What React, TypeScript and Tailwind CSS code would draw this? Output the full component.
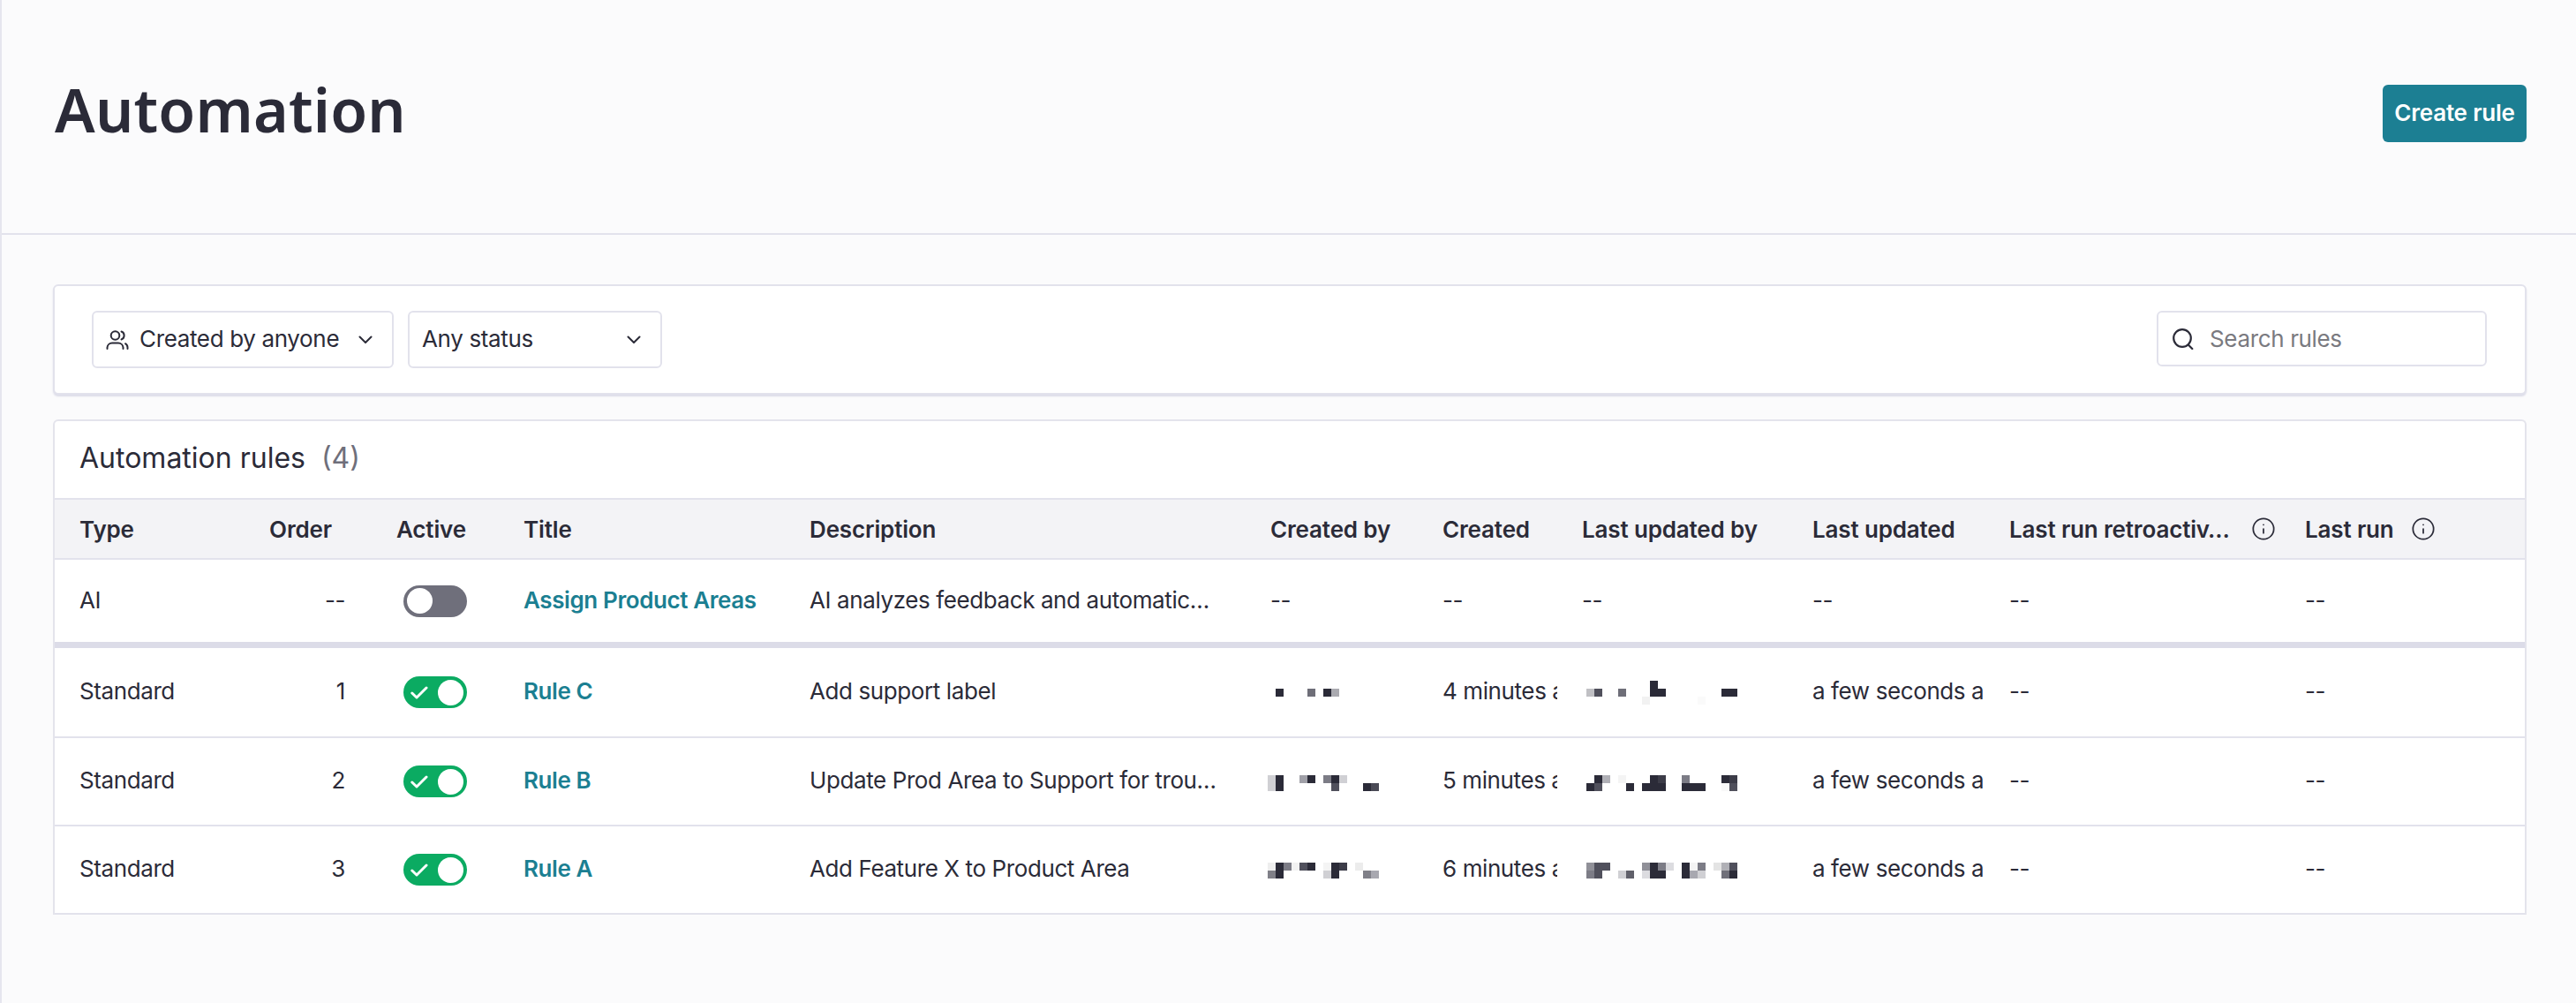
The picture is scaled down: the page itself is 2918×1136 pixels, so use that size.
import { Info } from 'lucide-react';

const D = '#2b2b38';
const ROW = 'grid grid-cols-[228px_145px_144px_324px_522px_195px_158px_261px_223px_335px_1fr] items-center';

type Cell = [number, number, string];

// pixelated names, one 9px block per cell
function Mosaic({ cells, rows, cols }: { cells: Cell[]; rows: number; cols: number }) {
  return (
    <svg width={cols * 9} height={rows * 9} viewBox={`0 0 ${cols * 9} ${rows * 9}`} shapeRendering="crispEdges">
      {cells.map(([c, r, fill], i) => (
        <rect key={i} x={c * 9} y={r * 9} width={9} height={9} fill={fill} />
      ))}
    </svg>
  );
}

const createdByC: Cell[] = [[1, 0, D], [5, 0, '#6e6e78'], [7, 0, D], [8, 0, '#aaaab0']];
const createdByB: Cell[] = [
  [0, 0, '#d0d0d4'], [1, 0, D], [4, 0, '#a0a0a8'], [5, 0, D], [7, 0, '#7c7c86'], [8, 0, D], [9, 0, '#d0d0d4'],
  [0, 1, '#d0d0d4'], [1, 1, D], [8, 1, '#50505c'], [12, 1, D], [13, 1, '#4a4a56'],
];
const createdByA: Cell[] = [
  [0, 0, '#eeeeee'], [1, 0, D], [2, 0, '#7c7c86'], [3, 0, '#f2f2f2'], [4, 0, '#50505c'], [5, 0, D], [7, 0, '#f4f4f4'], [8, 0, D], [9, 0, '#3c3c48'], [11, 0, '#ececec'],
  [0, 1, '#808088'], [1, 1, D], [7, 1, '#d0d0d4'], [8, 1, D], [12, 1, '#808088'], [13, 1, '#a8a8b0'],
];
const updatedByC: Cell[] = [
  [8, 0, D],
  [0, 1, '#c0c0c4'], [1, 1, '#50505c'], [4, 1, '#6e6e78'], [8, 1, D], [9, 1, D], [17, 1, D], [18, 1, D],
  [7, 2, '#f2f2f2'], [14, 2, '#fafafa'],
];
const updatedByB: Cell[] = [
  [1, 0, D], [2, 0, '#b0b0b6'], [4, 0, '#f4f4f4'], [8, 0, D], [9, 0, '#3c3c48'], [12, 0, '#7c7c86'], [17, 0, D], [18, 0, '#3c3c48'],
  [0, 1, D], [1, 1, '#50505c'], [5, 1, D], [7, 1, D], [8, 1, D], [9, 1, D], [12, 1, D], [13, 1, D], [14, 1, D], [17, 1, '#f8f8f8'], [18, 1, '#50505c'],
];
const updatedByA: Cell[] = [
  [0, 0, '#909098'], [1, 0, '#50505c'], [2, 0, '#50505c'], [7, 0, '#909098'], [8, 0, D], [9, 0, '#7c7c86'], [10, 0, '#dcdce0'], [12, 0, D], [13, 0, '#f4f4f4'], [14, 0, '#7c7c86'], [16, 0, '#e4e4e4'], [17, 0, '#b0b0b6'], [18, 0, '#50505c'],
  [0, 1, '#7c7c86'], [1, 1, '#50505c'], [4, 1, '#d0d0d4'], [5, 1, '#60606a'], [7, 1, '#dcdce0'], [8, 1, D], [9, 1, D], [12, 1, D], [13, 1, '#a8a8b0'], [14, 1, '#d0d0d4'], [17, 1, '#70707a'], [18, 1, D],
];

function Chevron() {
  return (
    <svg width="16" height="9" viewBox="0 0 16 9" fill="none" stroke={D} strokeWidth="2" strokeLinecap="round" strokeLinejoin="round">
      <path d="M1.5 1.5 8 8l6.500-6.500" />
    </svg>
  );
}

function UsersIcon() {
  return (
    <svg width="26" height="22" viewBox="0 0 26 22" fill="none" stroke={D} strokeWidth="2" strokeLinecap="round">
      <circle cx="10.500" cy="6" r="4.800" />
      <path d="M1.500 21v-1.500a5.500 5.500 0 0 1 5.500-5h7a5.500 5.500 0 0 1 5.500 5V21" />
      <path d="M17.500 1.500a4.800 4.800 0 0 1 0 9" />
      <path d="M24.500 21v-1.500a5 5 0 0 0-2.500-4.300" />
    </svg>
  );
}

function SearchIcon() {
  return (
    <svg width="24" height="24" viewBox="0 0 24 24" fill="none" stroke={D} strokeWidth="2.200" strokeLinecap="round">
      <circle cx="11" cy="11" r="9.800" />
      <path d="m17.800 18.500 4.500 4.500" />
    </svg>
  );
}

function Toggle({ on }: { on: boolean }) {
  if (!on) {
    return (
      <div className="ml-[22px] flex h-[36px] w-[72px] items-center rounded-full bg-[#6f6f7b] pl-[4px]">
        <div className="h-[29px] w-[29px] rounded-full bg-white" />
      </div>
    );
  }
  return (
    <div className="ml-[22px] flex h-[36px] w-[72px] items-center justify-between rounded-full bg-[#0bab62] pl-[8px] pr-[4px]">
      <svg width="20" height="15" viewBox="0 0 20 15" fill="none" stroke="white" strokeWidth="3" strokeLinecap="round" strokeLinejoin="round">
        <path d="M1.800 8 7 13 18 2" />
      </svg>
      <div className="h-[29px] w-[29px] rounded-full bg-white" />
    </div>
  );
}

function Filter({ width, children }: { width: string; children: React.ReactNode }) {
  return (
    <button className={`flex h-[65px] items-center justify-between rounded-[6px] border-2 border-[#e2e2ec] bg-white pl-[14px] pr-[22px] ${width}`}>
      {children}
    </button>
  );
}

function HeadCell({ label, info, className = '' }: { label: string; info?: boolean; className?: string }) {
  return (
    <div className={`flex items-center whitespace-nowrap pl-[14px] text-[26px] font-semibold tracking-[-0.15px] ${className}`}>
      <span>{label}</span>
      {info && <Info size={28} strokeWidth={1.5} className="ml-auto shrink-0" />}
    </div>
  );
}

function Cell({ children, className = '' }: { children: React.ReactNode; className?: string }) {
  return <div className={`overflow-hidden whitespace-nowrap pb-[3px] pl-[14px] ${className}`}>{children}</div>;
}

const rules = [
  { order: '1', name: 'Rule C', desc: 'Add support label', by: createdByC, byRows: 1, created: '4 minutes ago', upBy: updatedByC, upRows: 3, h: 'h-[102px]', nudge: '' },
  { order: '2', name: 'Rule B', desc: 'Update Prod Area to Support for trou…', by: createdByB, byRows: 2, created: '5 minutes ago', upBy: updatedByB, upRows: 2, h: 'h-[100px]', nudge: 'mt-[4px]' },
  { order: '3', name: 'Rule A', desc: 'Add Feature X to Product Area', by: createdByA, byRows: 2, created: '6 minutes ago', upBy: updatedByA, upRows: 2, h: 'h-[100px]', nudge: 'mt-[2px]' },
];

export default function App() {
  return (
    <div
      className="min-h-[1136px] border-l-2 border-[#e6e6ee] bg-[#fbfbfc] text-[#2b2b38]"
      style={{ fontFamily: 'Inter, "Liberation Sans", sans-serif' }}
    >
      <header className="flex h-[266px] items-start justify-between border-b-2 border-[#e2e2ec] pl-[60px] pr-[56px] pt-[96px]">
        <h1 className="text-[68px] font-semibold leading-[56px] tracking-[0.2px]" style={{ fontFamily: '"Noto Sans", sans-serif' }}>Automation</h1>
        <button className="h-[65px] w-[163px] rounded-[6px] bg-[#1c7f93] pb-[2px] text-[26px] font-semibold tracking-[-0.2px] text-white">Create rule</button>
      </header>

      <main className="pl-[58px] pr-[56px] pt-[56px]">
        <section className="flex h-[125px] items-center justify-between rounded-[6px] border-2 border-[#e2e2ec] bg-white pl-[42px] pr-[43px] shadow-[0_2px_2px_#dcdce8]">
          <div className="flex gap-[16px] text-[26px] tracking-[-0.35px]">
            <Filter width="w-[342px]">
              <span className="flex items-center gap-[12px]">
                <UsersIcon />
                <span className="pb-[2px]">Created by anyone</span>
              </span>
              <Chevron />
            </Filter>
            <Filter width="w-[288px]">
              <span className="pb-[2px]">Any status</span>
              <Chevron />
            </Filter>
          </div>
          <div className="mb-[2px] flex h-[63px] w-[374px] items-center gap-[18px] rounded-[6px] border-2 border-[#e2e2ec] bg-white pl-[16px]">
            <SearchIcon />
            <input placeholder="Search rules" className="w-[300px] bg-transparent text-[26px] tracking-[-0.35px] outline-none placeholder:text-[#7a7a80]" />
          </div>
        </section>

        <section className="mt-[28px] rounded-t-[6px] border-x-2 border-t-2 border-[#e4e4ec] bg-white text-[26px] tracking-[-0.4px]">
          <div className="flex h-[87px] items-center pb-[3px] pl-[28px] text-[32px] tracking-normal">
            Automation rules
            <span className="ml-[18px] text-[#6f6f7b]">(4)</span>
          </div>

          <div className={`${ROW} h-[70px] border-y-2 border-[#e2e2ec] bg-[#f3f3f6]`}>
            <HeadCell label="Type" className="pl-[28px]" />
            <HeadCell label="Order" className="justify-end pr-[59px]" />
            <HeadCell label="Active" />
            <HeadCell label="Title" />
            <HeadCell label="Description" />
            <HeadCell label="Created by" />
            <HeadCell label="Created" />
            <HeadCell label="Last updated by" />
            <HeadCell label="Last updated" />
            <HeadCell label="Last run retroactiv…" info className="pr-[19px]" />
            <HeadCell label="Last run" info className="pr-[101px]" />
          </div>

          <div className={`${ROW} h-[100px] border-b-[7px] border-[#dcdce8]`}>
            <Cell className="pl-[28px]">AI</Cell>
            <Cell className="pr-[44px] text-right">--</Cell>
            <Toggle on={false} />
            <Cell className="font-semibold text-[#1b7f92]">Assign Product Areas</Cell>
            <Cell>AI analyzes feedback and automatic…</Cell>
            <Cell>--</Cell>
            <Cell>--</Cell>
            <Cell>--</Cell>
            <Cell>--</Cell>
            <Cell>--</Cell>
            <Cell>--</Cell>
          </div>

          {rules.map((rule) => (
            <div key={rule.name} className={`${ROW} ${rule.h} border-b-2 border-[#e2e2ec]`}>
              <Cell className="pl-[28px]">Standard</Cell>
              <Cell className="pr-[44px] text-right">{rule.order}</Cell>
              <Toggle on />
              <Cell className="font-semibold text-[#1b7f92]">{rule.name}</Cell>
              <Cell>{rule.desc}</Cell>
              <div className={`flex pl-[11px] ${rule.nudge}`}><Mosaic cells={rule.by} rows={rule.byRows} cols={14} /></div>
              <Cell className="w-[144px]">{rule.created}</Cell>
              <div className={`flex pl-[19px] ${rule.nudge}`}><Mosaic cells={rule.upBy} rows={rule.upRows} cols={19} /></div>
              <Cell className="w-[207px]">a few seconds ago</Cell>
              <Cell>--</Cell>
              <Cell>--</Cell>
            </div>
          ))}
        </section>
      </main>
    </div>
  );
}
